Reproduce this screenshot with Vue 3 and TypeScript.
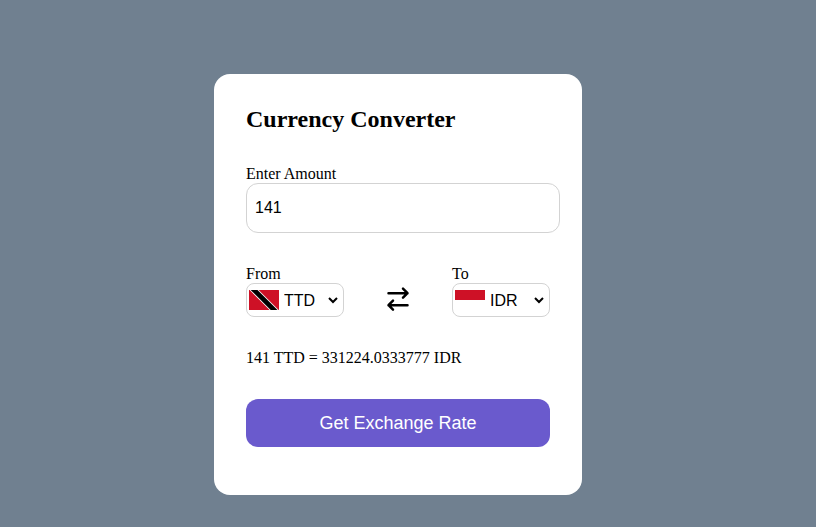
<script setup lang="ts">
import { computed, ref } from 'vue'

const rates: Record<string, number> = {
  TTD: 1,
  IDR: 331224.0333777 / 141,
}
const codes = Object.keys(rates)

const amount = ref('141')
const from = ref('TTD')
const to = ref('IDR')
const message = ref('141 TTD = 331224.0333777 IDR')

const total = computed(() => (Number(amount.value) * rates[to.value]) / rates[from.value])

function convert() {
  message.value = `${amount.value} ${from.value} = ${Number(total.value.toFixed(7))} ${to.value}`
}

function swap() {
  const previous = from.value
  from.value = to.value
  to.value = previous
}
</script>

<template>
  <main class="page">
    <form class="card" @submit.prevent="convert">
      <h2 class="title">Currency Converter</h2>

      <div class="amount">
        <label for="amount">Enter Amount</label>
        <input id="amount" v-model="amount" type="text" inputmode="decimal" />
      </div>

      <div class="dropdowns">
        <div class="currency">
          <label for="from">From</label>
          <div class="select-box">
            <svg class="flag" viewBox="0 0 30 20" aria-hidden="true">
              <template v-if="from === 'TTD'">
                <path fill="#ce1126" d="M0 0h30v20H0z" />
                <path fill="#fff" d="M.6 0h9l20 20h-9z" />
                <path fill="#000" d="M1.7 0h6.8l20 20h-6.8z" />
              </template>
              <template v-else>
                <path fill="#fff" d="M0 0h30v20H0z" />
                <path fill="#ce1126" d="M0 0h30v10H0z" />
              </template>
            </svg>
            <select id="from" v-model="from">
              <option v-for="code in codes" :key="code" :value="code">{{ code }}</option>
            </select>
          </div>
        </div>

        <button class="swap" type="button" aria-label="Swap currencies" @click="swap">
          <svg viewBox="0 0 24 24" aria-hidden="true">
            <path d="M2.5 5.2H21.5M17 .7L21.5 5.2L17 9.7M21.5 17.2H2.5M7 12.7L2.5 17.2L7 21.7" />
          </svg>
        </button>

        <div class="currency">
          <label for="to">To</label>
          <div class="select-box">
            <svg class="flag" viewBox="0 0 30 20" aria-hidden="true">
              <template v-if="to === 'TTD'">
                <path fill="#ce1126" d="M0 0h30v20H0z" />
                <path fill="#fff" d="M.6 0h9l20 20h-9z" />
                <path fill="#000" d="M1.7 0h6.8l20 20h-6.8z" />
              </template>
              <template v-else>
                <path fill="#fff" d="M0 0h30v20H0z" />
                <path fill="#ce1126" d="M0 0h30v10H0z" />
              </template>
            </svg>
            <select id="to" v-model="to">
              <option v-for="code in codes" :key="code" :value="code">{{ code }}</option>
            </select>
          </div>
        </div>
      </div>

      <p class="message">{{ message }}</p>

      <button class="submit" type="submit">Get Exchange Rate</button>
    </form>
  </main>
</template>

<style>
body {
  margin: 0;
  background: slategray;
}
</style>

<style scoped>
.page {
  box-sizing: border-box;
  min-height: 100vh;
  padding: 42px 20px 0 0;
  display: flex;
  align-items: center;
  justify-content: center;
  font: 16px/18px "Liberation Serif", "Times New Roman", serif;
  color: #000;
}

.card {
  box-sizing: border-box;
  width: 100%;
  max-width: 368px;
  padding: 32px 32px 48px;
  display: flex;
  flex-direction: column;
  gap: 32px;
  border-radius: 16px;
  background: #fff;
}

.title {
  margin: 0;
  font-size: 24px;
  line-height: 27px;
}

.amount {
  display: flex;
  flex-direction: column;
}

.amount input {
  box-sizing: content-box;
  width: 100%;
  height: 48px;
  padding: 0 0 0 8px;
  border: 1px solid lightgray;
  border-radius: 12px;
  outline: none;
  background: #fff;
  color: #000;
  font: 16px "Liberation Sans", Arial, sans-serif;
}

.dropdowns {
  display: flex;
  align-items: flex-end;
  justify-content: space-between;
}

.currency {
  display: flex;
  flex-direction: column;
}

.select-box {
  box-sizing: border-box;
  width: 98px;
  height: 34px;
  padding: 0 2px;
  display: flex;
  align-items: center;
  border: 1px solid lightgray;
  border-radius: 8px;
}

.flag {
  flex: none;
  width: 30px;
  height: 20px;
}

.select-box select {
  flex: 1;
  min-width: 0;
  padding: 0 0 0 1px;
  border: none;
  outline: none;
  background: #fff;
  color: #000;
  font: 16px "Liberation Sans", Arial, sans-serif;
}

.swap {
  height: 34px;
  padding: 0;
  display: flex;
  align-items: center;
  border: none;
  background: none;
  cursor: pointer;
}

.swap svg {
  width: 24px;
  height: 24px;
  fill: none;
  stroke: #000;
  stroke-width: 2.5;
  stroke-linecap: round;
  stroke-linejoin: round;
  overflow: visible;
}

.message {
  margin: 0;
}

.submit {
  height: 48px;
  padding: 0;
  border: none;
  border-radius: 12px;
  background: #6a5acd;
  color: #fff;
  font: 18px "Liberation Sans", Arial, sans-serif;
  cursor: pointer;
}
</style>
